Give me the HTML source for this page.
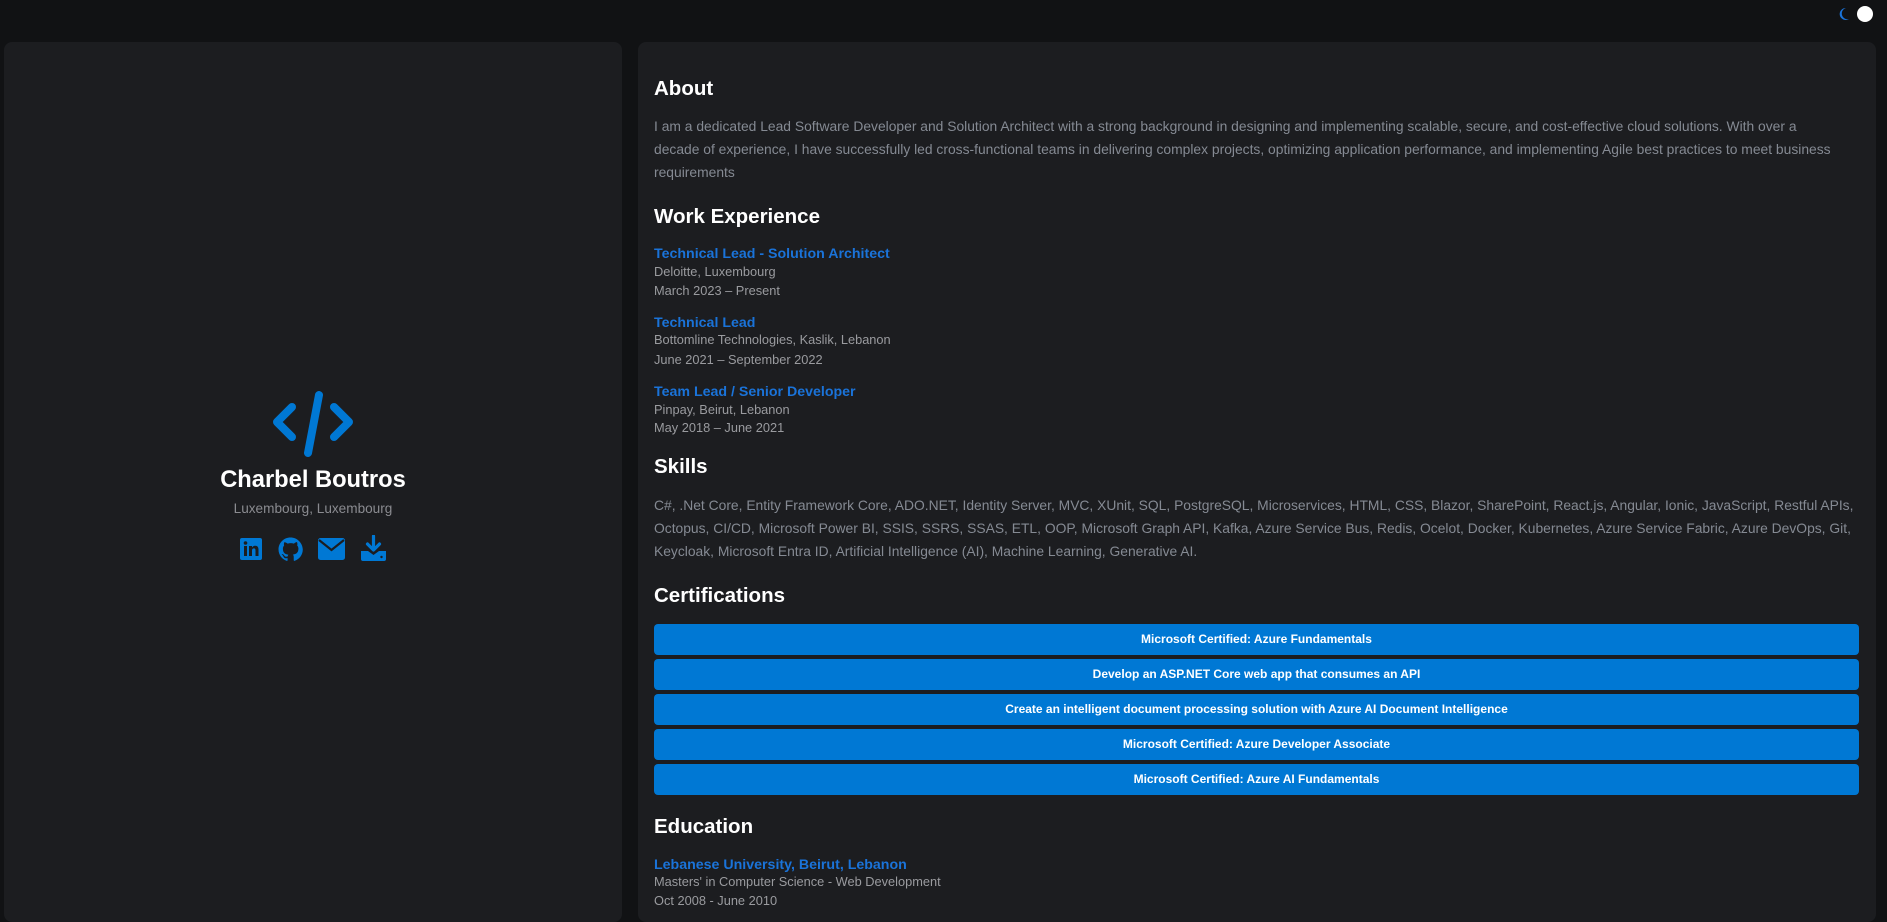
<!DOCTYPE html>
<html><head><meta charset="utf-8"><style>
*{margin:0;padding:0;box-sizing:border-box}
body{width:1887px;height:912px;background:#111214;font-family:"Liberation Sans",sans-serif;overflow:hidden;position:relative}
.card{position:absolute;background:#1c1d20;border-radius:8px}
.a{position:absolute;white-space:nowrap}
h2{position:absolute;left:654px;font-size:20.5px;font-weight:bold;color:#fff;line-height:28px;white-space:nowrap}
.p{position:absolute;left:654px;font-size:13.85px;color:#858a93;line-height:23px;white-space:nowrap}
.t{position:absolute;left:654px;font-size:14.2px;font-weight:bold;color:#1a73d9;line-height:18px;white-space:nowrap}
.s{position:absolute;left:654px;font-size:12.8px;color:#9a9b9f;line-height:17px;white-space:nowrap}
.b{position:absolute;left:654px;width:1205px;height:31px;background:#0078d4;border-radius:4px;color:#fff;font-size:12px;font-weight:bold;text-align:center;line-height:31px}
</style></head><body>
<svg class="a" style="left:1838px;top:7px" width="12" height="14" viewBox="0 0 12 14"><path d="M8 1 A6 6 0 1 0 11 12 A5 5 0 0 1 8 1Z" fill="#1a73d9"/></svg>
<div class="a" style="left:1857px;top:6px;width:16px;height:16px;border-radius:50%;background:#fff"></div>
<div class="card" style="left:4px;top:42px;width:618px;height:880px"></div>
<div class="card" style="left:638px;top:42px;width:1238px;height:880px"></div>

<svg class="a" style="left:272px;top:391px" width="82" height="66" viewBox="0 0 82 66"><g fill="none" stroke="#0078d4" stroke-width="8" stroke-linecap="round" stroke-linejoin="round"><path d="M20 16 L5 31 L20 46"/><path d="M62 16 L77 31 L62 46"/><path d="M47 4 L36 62"/></g></svg>
<div class="a" style="left:4px;width:618px;top:465px;text-align:center;color:#fff;font-size:23.7px;font-weight:bold;line-height:30px">Charbel Boutros</div>
<div class="a" style="left:4px;width:618px;top:500px;text-align:center;color:#8a8b90;font-size:13.6px;line-height:18px">Luxembourg, Luxembourg</div>
<svg class="a" style="left:239px;top:537px" width="24" height="24" viewBox="0 0 24 24"><rect x="1" y="1" width="22" height="22" rx="2" fill="#0078d4"/><rect x="5" y="9" width="3" height="10" fill="#1c1d20"/><circle cx="6.5" cy="6" r="1.8" fill="#1c1d20"/><path d="M10 9h3v1.5c.7-1.2 2-1.8 3.3-1.8 2.3 0 3.2 1.5 3.2 4V19h-3v-5.5c0-1.3-.4-2.1-1.6-2.1s-1.9.9-1.9 2.1V19h-3z" fill="#1c1d20"/></svg>
<svg class="a" style="left:278px;top:537px" width="25" height="25" viewBox="0 0 24 24"><path fill="#0078d4" d="M12 .5C5.6.5.5 5.6.5 12c0 5.1 3.3 9.4 7.9 10.9.6.1.8-.3.8-.6v-2c-3.2.7-3.900-1.500-3.900-1.500-.5-1.300-1.300-1.700-1.300-1.700-1-.7.1-.7.1-.7 1.200.1 1.800 1.200 1.800 1.200 1 1.800 2.700 1.300 3.400 1 .1-.8.4-1.300.7-1.600-2.600-.3-5.300-1.300-5.300-5.700 0-1.300.5-2.300 1.200-3.100-.1-.3-.5-1.500.1-3.100 0 0 1-.3 3.300 1.200a11.500 11.500 0 0 1 6 0C17.300 4.700 18.300 5 18.300 5c.6 1.600.2 2.800.1 3.100.8.8 1.200 1.900 1.200 3.100 0 4.400-2.700 5.400-5.300 5.700.4.4.8 1.100.8 2.200v3.200c0 .3.2.7.8.6 4.600-1.500 7.900-5.800 7.900-10.900C23.500 5.600 18.400.5 12 .5z"/></svg>
<svg class="a" style="left:318px;top:538px" width="27" height="22" viewBox="0 0 27 22"><rect x="0" y="0" width="27" height="22" rx="2.5" fill="#0078d4"/><path d="M1 2 L13.5 12 L26 2" fill="none" stroke="#1c1d20" stroke-width="2.2"/></svg>
<svg class="a" style="left:360px;top:535px" width="27" height="27" viewBox="0 0 27 27"><path d="M13.5 1v13M7.5 9l6 6 6-6" fill="none" stroke="#0078d4" stroke-width="3.2" stroke-linecap="round" stroke-linejoin="round"/><path d="M1 16h7l5.5 4 5.5-4h7v8a2 2 0 0 1-2 2H3a2 2 0 0 1-2-2z" fill="#0078d4"/><circle cx="21.5" cy="22" r="1.2" fill="#1c1d20"/></svg>

<h2 style="top:75px">About</h2>
<div class="p" style="top:115px">I am a dedicated Lead Software Developer and Solution Architect with a strong background in designing and implementing scalable, secure, and cost-effective cloud solutions. With over a<br>decade of experience, I have successfully led cross-functional teams in delivering complex projects, optimizing application performance, and implementing Agile best practices to meet business<br>requirements</div>
<h2 style="top:203px">Work Experience</h2>
<div class="t" style="top:245px">Technical Lead - Solution Architect</div>
<div class="s" style="top:263px">Deloitte, Luxembourg</div>
<div class="s" style="top:282px">March 2023 – Present</div>
<div class="t" style="top:314px">Technical Lead</div>
<div class="s" style="top:331px">Bottomline Technologies, Kaslik, Lebanon</div>
<div class="s" style="top:351px">June 2021 – September 2022</div>
<div class="t" style="top:383px">Team Lead / Senior Developer</div>
<div class="s" style="top:401px">Pinpay, Beirut, Lebanon</div>
<div class="s" style="top:419px">May 2018 – June 2021</div>
<h2 style="top:453px">Skills</h2>
<div class="p" style="top:494px">C#, .Net Core, Entity Framework Core, ADO.NET, Identity Server, MVC, XUnit, SQL, PostgreSQL, Microservices, HTML, CSS, Blazor, SharePoint, React.js, Angular, Ionic, JavaScript, Restful APIs,<br>Octopus, CI/CD, Microsoft Power BI, SSIS, SSRS, SSAS, ETL, OOP, Microsoft Graph API, Kafka, Azure Service Bus, Redis, Ocelot, Docker, Kubernetes, Azure Service Fabric, Azure DevOps, Git,<br>Keycloak, Microsoft Entra ID, Artificial Intelligence (AI), Machine Learning, Generative AI.</div>
<h2 style="top:582px">Certifications</h2>
<div class="b" style="top:624px">Microsoft Certified: Azure Fundamentals</div>
<div class="b" style="top:659px">Develop an ASP.NET Core web app that consumes an API</div>
<div class="b" style="top:694px">Create an intelligent document processing solution with Azure AI Document Intelligence</div>
<div class="b" style="top:729px">Microsoft Certified: Azure Developer Associate</div>
<div class="b" style="top:764px">Microsoft Certified: Azure AI Fundamentals</div>
<h2 style="top:813px">Education</h2>
<div class="t" style="top:856px">Lebanese University, Beirut, Lebanon</div>
<div class="s" style="top:873px">Masters' in Computer Science - Web Development</div>
<div class="s" style="top:892px">Oct 2008 - June 2010</div>
</body></html>
